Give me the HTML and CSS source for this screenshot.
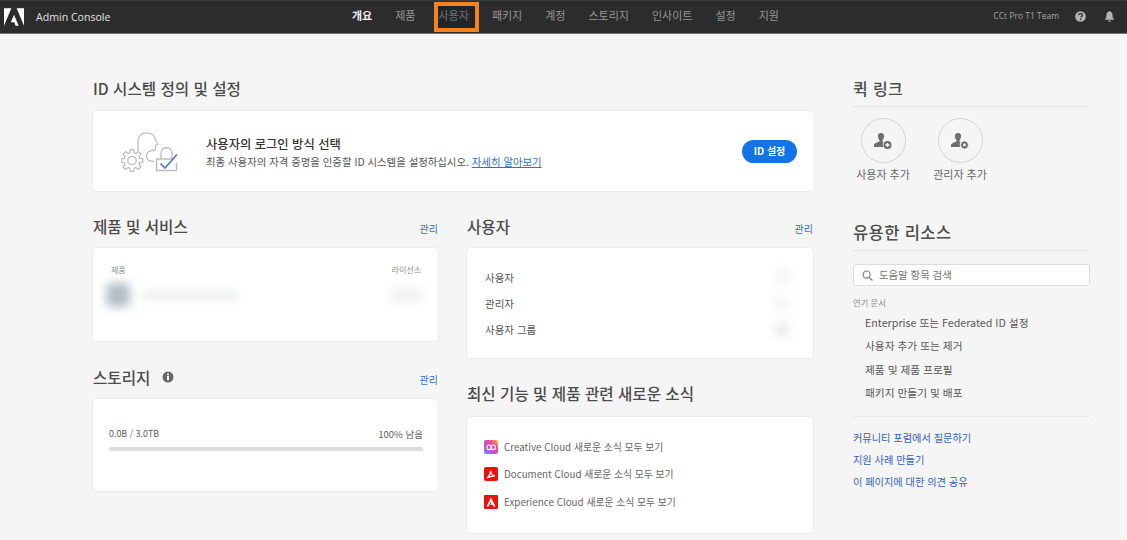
FILE: index.html
```html
<!DOCTYPE html>
<html lang="ko">
<head>
<meta charset="utf-8">
<title>Admin Console</title>
<link rel="stylesheet" href="styles.css">
</head>
<body>
<header class="topbar">
  <div class="brand">
    <svg class="adobe-logo" viewBox="0 0 24 21" aria-hidden="true"><path fill="#fff" d="M0 21 8.800 0H0zM15.200 0 24 21V0zM12 7.700 17.600 21h-3.700l-1.600-4.100H8.200z"/></svg>
    <span class="brand-name">Admin Console</span>
  </div>
  <nav class="nav">
    <a class="nav-item is-active">개요</a>
    <a class="nav-item">제품</a>
    <a class="nav-item is-marked">사용자</a>
    <a class="nav-item">패키지</a>
    <a class="nav-item">계정</a>
    <a class="nav-item">스토리지</a>
    <a class="nav-item">인사이트</a>
    <a class="nav-item">설정</a>
    <a class="nav-item">지원</a>
  </nav>
  <div class="top-right">
    <span class="org">CCt Pro T1 Team</span>
    <svg class="top-icon" viewBox="0 0 12 12" aria-hidden="true"><circle cx="6" cy="6" r="5.800" fill="#b3b3b3"/><path d="M4 4.700c0-1.200.9-1.800 2.100-1.800s2 .7 2 1.600c0 1.400-1.700 1.400-1.700 2.500" fill="none" stroke="#2c2c2c" stroke-width="1.400"/><circle cx="6.300" cy="9.100" r=".9" fill="#2c2c2c"/></svg>
    <svg class="top-icon" viewBox="0 0 12 12" aria-hidden="true"><path fill="#b3b3b3" d="M6 0c.6 0 1 .4 1 .9 1.600.4 2.300 1.700 2.300 3.400 0 2.200.5 3.400 1.500 4.400v.8H1.200v-.8c1-1 1.500-2.200 1.500-4.400C2.700 2.600 3.400 1.300 5 .9 5 .4 5.400 0 6 0zM4.600 10.400h2.800C7.300 11.300 6.800 12 6 12s-1.300-.7-1.400-1.600z"/></svg>
  </div>
</header>

<main class="page">
  <div class="content">
    <section class="id-section">
      <h2 class="heading">ID 시스템 정의 및 설정</h2>
      <div class="card id-card">
        <svg class="id-art" viewBox="0 0 57 40" aria-hidden="true">
          <g fill="none" stroke="#bcbcbc" stroke-width="1.300" stroke-linejoin="round">
            <g transform="translate(11 28.500)">
              <path d="M10.860-1.720V1.720L7.690 2.200 7 3.880 8.900 6.470 6.470 8.900 3.880 7 2.200 7.690 1.720 10.860H-1.720L-2.200 7.690-3.880 7-6.470 8.900-8.900 6.470-7 3.880-7.690 2.200-10.860 1.720V-1.720L-7.690-2.200-7-3.880-8.900-6.470-6.470-8.900-3.880-7-2.200-7.690-1.720-10.860H1.720L2.200-7.690 3.880-7 6.470-8.900 8.900-6.470 7-3.880 7.690-2.200Z"/>
              <circle r="4.200"/>
            </g>
            <path d="M17 19V9C17 4 21 .8 26 .8 31 .8 34 4 34.500 8L37 12 34.500 13.500V17C34.500 18 33 18.500 31 18.500 28 18.500 25.500 21 25.500 24 25.500 27 28 29.500 33 29.500"/>
            <path d="M40 27V21C40 14 51 14 51 21V27"/>
            <path d="M52 27H35.500V38.500H55.500V31" stroke-width="1.500"/>
          </g>
          <path d="M39.500 31.500l4.500 4.500L56 22.500" fill="none" stroke="#4a7fc4" stroke-width="1.700"/>
        </svg>
        <div class="id-text">
          <h3 class="id-title">사용자의 로그인 방식 선택</h3>
          <p class="id-desc">최종 사용자의 자격 증명을 인증할 ID 시스템을 설정하십시오. <a class="learn">자세히 알아보기</a></p>
        </div>
        <a class="cta">ID 설정</a>
      </div>
    </section>

    <div class="columns">
      <div class="col">
        <div class="head-row"><h2 class="heading">제품 및 서비스</h2><a class="manage">관리</a></div>
        <div class="card products">
          <div class="prod-head"><span>제품</span><span>라이선스</span></div>
          <div class="prod-row">
            <span class="blur-dot"></span>
            <span class="blur-line"></span>
            <span class="blur-count"></span>
          </div>
        </div>
        <div class="head-row storage-head">
          <h2 class="heading">스토리지
            <svg class="info" viewBox="0 0 12 12" aria-hidden="true"><circle cx="6" cy="6" r="5.500" fill="#666"/><rect x="5" y="5" width="2" height="4.200" fill="#fff"/><rect x="5" y="2.500" width="2" height="1.700" fill="#fff"/></svg>
          </h2>
          <a class="manage">관리</a>
        </div>
        <div class="card storage">
          <div class="storage-row"><span class="used">0.0B / 3.0TB</span><span>100% 남음</span></div>
          <div class="meter"></div>
        </div>
      </div>

      <div class="col">
        <div class="head-row"><h2 class="heading">사용자</h2><a class="manage">관리</a></div>
        <div class="card users">
          <div class="user-row"><span>사용자</span><span class="blur-num"></span></div>
          <div class="user-row"><span>관리자</span><span class="blur-num"></span></div>
          <div class="user-row"><span>사용자 그룹</span><span class="blur-num strong"></span></div>
        </div>
        <h2 class="heading news-head">최신 기능 및 제품 관련 새로운 소식</h2>
        <div class="card news">
          <a class="news-row">
            <svg class="news-icon" viewBox="0 0 14 14" aria-hidden="true"><defs><linearGradient id="cc" x1="0" y1="1" x2="1" y2="0"><stop offset="0" stop-color="#4aa3f0"/><stop offset=".35" stop-color="#c04ee0"/><stop offset=".65" stop-color="#f0479a"/><stop offset="1" stop-color="#f7b733"/></linearGradient></defs><rect width="14" height="14" rx="2" fill="url(#cc)"/><circle cx="5.300" cy="7.300" r="2.300" fill="none" stroke="#fff" stroke-width="1.100"/><circle cx="9.200" cy="7.300" r="2.300" fill="none" stroke="#fff" stroke-width="1.100"/></svg>
            <span>Creative Cloud 새로운 소식 모두 보기</span>
          </a>
          <a class="news-row">
            <svg class="news-icon" viewBox="0 0 14 14" aria-hidden="true"><rect width="14" height="14" rx="2" fill="#e8130f"/><path d="M3 10.800c1.500-.8 3-3.500 3.600-7 .4 3 2 5 4.400 5.300-2.500-.2-5.500.4-8 1.700z" fill="none" stroke="#fff" stroke-width="1.200"/></svg>
            <span>Document Cloud 새로운 소식 모두 보기</span>
          </a>
          <a class="news-row">
            <svg class="news-icon" viewBox="0 0 14 14" aria-hidden="true"><rect width="14" height="14" rx="1" fill="#e8130f"/><path fill="#fff" d="M7 2.500 11.500 11.500H9.300L8.500 9.700H6.200L7.400 7.800 6.900 6.500 4.600 11.500H2.500z"/></svg>
            <span>Experience Cloud 새로운 소식 모두 보기</span>
          </a>
        </div>
      </div>
    </div>
  </div>

  <aside class="side">
    <h2 class="side-heading">퀵 링크</h2>
    <div class="quick">
      <a class="quick-item">
        <span class="quick-circle">
          <svg class="quick-icon" viewBox="0 0 18 16" aria-hidden="true"><path fill="#6e6e6e" d="M7 0a3 3 0 0 1 3 3.200c0 1.800-.9 3.300-1.500 4.100v1.200l1 .6A4.500 4.500 0 0 0 9.500 14H0v-2.500c1-1.500 3.500-2.400 5.500-3V7.300C4.900 6.500 4 5 4 3.200A3 3 0 0 1 7 0z"/><circle cx="13.500" cy="12" r="4" fill="#6e6e6e"/><path d="M13.500 10v4M11.500 12h4" stroke="#fff" stroke-width="1.300"/></svg>
        </span>
        <span class="quick-label">사용자 추가</span>
      </a>
      <a class="quick-item">
        <span class="quick-circle">
          <svg class="quick-icon" viewBox="0 0 18 16" aria-hidden="true"><path fill="#6e6e6e" d="M7 0a3 3 0 0 1 3 3.200c0 1.800-.9 3.300-1.500 4.100v1.200l1 .6A4.500 4.500 0 0 0 9.500 14H0v-2.500c1-1.500 3.500-2.400 5.500-3V7.300C4.900 6.500 4 5 4 3.200A3 3 0 0 1 7 0z"/><circle cx="13.500" cy="12" r="2.300" fill="none" stroke="#6e6e6e" stroke-width="1.700"/><path d="M13.500 8.300v1.500M13.500 14.200v1.500M9.800 12h1.500M15.700 12h1.500M10.900 9.400l1 1M15.100 13.600l1 1M10.900 14.600l1-1M15.100 10.400l1-1" stroke="#6e6e6e" stroke-width="1.500"/></svg>
        </span>
        <span class="quick-label">관리자 추가</span>
      </a>
    </div>

    <h2 class="side-heading resources">유용한 리소스</h2>
    <label class="search">
      <svg class="search-icon" viewBox="0 0 12 12" aria-hidden="true"><circle cx="5" cy="5" r="3.900" fill="none" stroke="#777" stroke-width="1.200"/><path d="M8 8l3.400 3.400" stroke="#777" stroke-width="1.400"/></svg>
      <span class="search-text">도움말 항목 검색</span>
    </label>
    <p class="docs-label">연기 문서</p>
    <ul class="docs">
      <li>Enterprise 또는 Federated ID 설정</li>
      <li>사용자 추가 또는 제거</li>
      <li>제품 및 제품 프로필</li>
      <li>패키지 만들기 및 배포</li>
    </ul>
    <ul class="links">
      <li>커뮤니티 포럼에서 질문하기</li>
      <li>지원 사례 만들기</li>
      <li>이 페이지에 대한 의견 공유</li>
    </ul>
  </aside>
</main>
</body>
</html>
```
FILE: styles.css
```css
* { box-sizing: border-box; }
html, body { margin: 0; padding: 0; }
body {
  width: 1127px;
  height: 540px;
  overflow: hidden;
  background: #f5f5f5;
  color: #4b4b4b;
  font-family: "Noto Sans CJK KR", "Noto Sans", sans-serif;
}
h2, h3, p, ul { margin: 0; padding: 0; }
ul { list-style: none; }

.topbar {
  display: flex;
  align-items: center;
  height: 34px;
  padding: 0 12px 1px 4px;
  background: #2c2c2c;
  border-bottom: 1px solid #777;
  border-top: 1px solid #3a3a3a;
}
.brand { display: flex; align-items: center; width: 348px; flex: none; }
.adobe-logo { width: 20px; height: 18px; }
.brand-name { margin-left: 12px; font-size: 10.600px; color: #e2e2e2; font-family: "Open Sans", sans-serif; }
.nav { display: flex; gap: 23px; font-size: 11px; margin-top: -3px; }
.nav-item { position: relative; color: #989898; white-space: nowrap; }
.nav-item.is-active { color: #f0f0f0; font-weight: 700; }
.is-marked::after {
  content: "";
  box-sizing: border-box;
  position: absolute;
  left: -5px;
  right: -10px;
  top: -5px;
  height: 30px;
  border: 4px solid #f5821f;
  background: rgba(10, 20, 30, .28);
}
.top-right { display: flex; align-items: center; margin-left: auto; }
.org { font-size: 8.500px; color: #a5a5a5; font-family: "Open Sans", sans-serif; margin-right: 16px; margin-top: -3px; }
.top-icon { width: 11px; height: 11px; margin-right: 18px; }
.top-icon:last-child { margin-right: 0; }

.page { display: flex; padding: 44px 0 0 93px; gap: 39px; }
.content { width: 721px; flex: none; }

.heading {
  display: flex;
  align-items: center;
  font-size: 15.600px;
  line-height: 20px;
  font-weight: 500;
  color: #4b4b4b;
}
.card {
  background: #fff;
  border-radius: 4px;
  box-shadow: 0 0 2px rgba(0, 0, 0, .12);
}

.id-section .card { margin-top: 13px; }
.id-card { display: flex; align-items: center; height: 80px; padding: 0 17px 0 28px; }
.id-art { width: 57px; height: 40px; flex: none; margin-top: 1px; }
.id-text { margin-left: 28px; margin-top: 2px; }
.id-title { font-size: 12.300px; font-weight: 500; line-height: 17px; color: #333; }
.id-desc { font-size: 10.400px; line-height: 15px; color: #555; margin-top: 1px; }
.learn { color: #2f6fc4; text-decoration: underline; }
.cta {
  margin-left: auto;
  width: 55px;
  height: 23px;
  line-height: 22px;
  text-align: center;
  border-radius: 12px;
  background: #1473e6;
  color: #fff;
  font-size: 10px;
  font-weight: 700;
}

.columns { display: flex; gap: 29px; margin-top: 25px; }
.col { width: 346px; }
.col:first-child { width: 345px; }
.head-row { display: flex; justify-content: space-between; align-items: center; height: 20px; }
.manage { font-size: 10px; color: #2f6fc4; margin-top: 4px; }

.products { height: 93px; margin-top: 12px; padding: 16px 17px 0 18px; overflow: hidden; }
.prod-head { display: flex; justify-content: space-between; font-size: 8px; line-height: 12px; color: #8e8e8e; }
.prod-row { display: flex; align-items: center; margin-top: 7px; height: 24px; }
.blur-dot { width: 24px; height: 24px; margin-left: -5px; border-radius: 6px; background: #b4bec6; filter: blur(5px); }
.blur-line { width: 96px; height: 8px; margin-left: 12px; background: #eaebec; filter: blur(4px); }
.blur-count { width: 30px; height: 14px; margin-left: auto; background: #f0f0f0; filter: blur(5px); }

.storage-head { margin-top: 26px; }
.info { width: 12px; height: 12px; margin-left: 12px; }
.storage { height: 92px; margin-top: 12px; padding: 28px 15px 0 16px; }
.storage-row { display: flex; justify-content: space-between; font-size: 9.500px; line-height: 14px; color: #5d5d5d; }
.used { font-size: 8.900px; }
.meter { height: 4px; margin-top: 6px; background: #dcdcdc; border-radius: 2px; }

.users { height: 110px; margin-top: 12px; padding: 16px 24px 0 18px; }
.user-row { display: flex; justify-content: space-between; align-items: center; height: 26px; font-size: 10.500px; color: #555; }
.blur-num { width: 14px; height: 14px; background: #f4f4f4; filter: blur(5px); }
.blur-num.strong { background: #ebebeb; }

.news-head { margin-top: 25px; }
.news { height: 116px; margin-top: 14px; padding: 16px 0 0 17px; }
.news-row { display: flex; align-items: center; height: 27.500px; font-size: 9.800px; color: #666; }
.news-icon { width: 14px; height: 14px; flex: none; margin-right: 6px; }

.side { width: 237px; flex: none; }
.side-heading {
  font-size: 16px;
  line-height: 22px;
  height: 30px;
  font-weight: 500;
  color: #4b4b4b;
  border-bottom: 1px solid #e3e3e3;
  margin-top: -1px;
  letter-spacing: .4px;
}
.quick { display: flex; gap: 21px; padding: 11px 0 0 2px; }
.quick-item { display: flex; flex-direction: column; align-items: center; width: 56px; }
.quick-circle {
  display: flex;
  align-items: center;
  justify-content: center;
  width: 45px;
  height: 45px;
  border: 1px solid #d4d4d4;
  border-radius: 50%;
}
.quick-icon { width: 18px; height: 16px; }
.quick-label { font-size: 11px; line-height: 14px; margin-top: 4px; color: #666; white-space: nowrap; }

.resources { margin-top: 40px; height: 30px; font-size: 16.500px; }
.search {
  display: flex;
  align-items: center;
  height: 22px;
  margin-top: 13px;
  padding-left: 8px;
  background: #fff;
  border: 1px solid #dcdcdc;
  border-radius: 3px;
  font-size: 10.400px;
  color: #777;
}
.search-icon { width: 11px; height: 11px; margin-right: 6px; }
.search-text { margin-top: -2px; }
.docs-label { margin-top: 10px; font-size: 8.300px; line-height: 12px; color: #8e8e8e; }
.docs { padding: 3px 0 12px 12px; border-bottom: 1px solid #e8e8e8; }
.docs li { height: 23.300px; line-height: 23.300px; font-size: 10.700px; color: #555; }
.links { padding-top: 10px; }
.links li { height: 22px; line-height: 22px; font-size: 10.200px; color: #2f62b5; }
```
